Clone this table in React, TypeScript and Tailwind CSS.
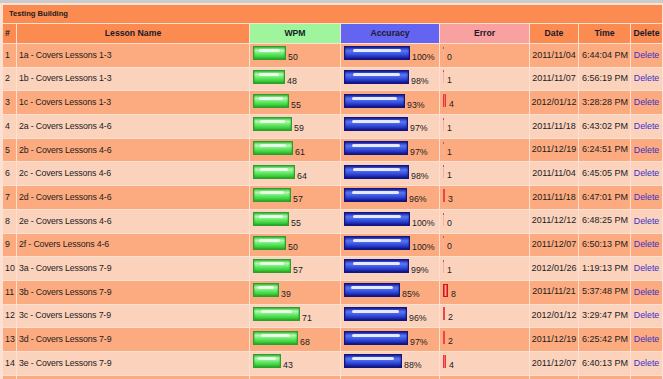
import React from 'react';

type Row = {
  lesson: string;
  wpm: number;
  acc: number;
  err: number;
  date: string;
  time: string;
};

const rows: Row[] = [
  { lesson: '1a - Covers Lessons 1-3', wpm: 50, acc: 100, err: 0, date: '2011/11/04', time: '6:44:04 PM' },
  { lesson: '1b - Covers Lessons 1-3', wpm: 48, acc: 98, err: 1, date: '2011/11/07', time: '6:56:19 PM' },
  { lesson: '1c - Covers Lessons 1-3', wpm: 55, acc: 93, err: 4, date: '2012/01/12', time: '3:28:28 PM' },
  { lesson: '2a - Covers Lessons 4-6', wpm: 59, acc: 97, err: 1, date: '2011/11/18', time: '6:43:02 PM' },
  { lesson: '2b - Covers Lessons 4-6', wpm: 61, acc: 97, err: 1, date: '2011/12/19', time: '6:24:51 PM' },
  { lesson: '2c - Covers Lessons 4-6', wpm: 64, acc: 98, err: 1, date: '2011/11/04', time: '6:45:05 PM' },
  { lesson: '2d - Covers Lessons 4-6', wpm: 57, acc: 96, err: 3, date: '2011/11/18', time: '6:47:01 PM' },
  { lesson: '2e - Covers Lessons 4-6', wpm: 55, acc: 100, err: 0, date: '2011/12/12', time: '6:48:25 PM' },
  { lesson: '2f - Covers Lessons 4-6', wpm: 50, acc: 100, err: 0, date: '2011/12/07', time: '6:50:13 PM' },
  { lesson: '3a - Covers Lessons 7-9', wpm: 57, acc: 99, err: 1, date: '2012/01/26', time: '1:19:13 PM' },
  { lesson: '3b - Covers Lessons 7-9', wpm: 39, acc: 85, err: 8, date: '2011/11/21', time: '5:37:48 PM' },
  { lesson: '3c - Covers Lessons 7-9', wpm: 71, acc: 96, err: 2, date: '2012/01/12', time: '3:29:47 PM' },
  { lesson: '3d - Covers Lessons 7-9', wpm: 68, acc: 97, err: 2, date: '2011/12/19', time: '6:25:42 PM' },
  { lesson: '3e - Covers Lessons 7-9', wpm: 43, acc: 88, err: 4, date: '2011/12/07', time: '6:40:13 PM' },
];

function GreenBar({ value }: { value: number }) {
  return (
    <span
      className="relative inline-block h-[14px] border border-[#2f9e2f] bg-[linear-gradient(to_bottom,#48d048_0%,#b4f8b4_28%,#5ee85e_60%,#28b828_100%)] shadow-[inset_0_0_2px_#1c8f1c]"
      style={{ width: Math.round(value * 0.66) }}
    >
      <span className="absolute left-[16%] right-[16%] top-[2px] h-[3px] rounded-full bg-white/75 blur-[0.6px]" />
    </span>
  );
}

function BlueBar({ value }: { value: number }) {
  return (
    <span
      className="relative inline-block h-[14px] border border-[#14147a] bg-[linear-gradient(to_bottom,#1a28b8_0%,#5a78f0_32%,#3550e0_62%,#111894_100%)] shadow-[inset_0_0_2px_#0c0c66]"
      style={{ width: Math.round(value * 0.66) }}
    >
      <span className="absolute left-[12%] right-[12%] top-[2px] h-[3px] rounded-full bg-white/85 blur-[0.6px]" />
    </span>
  );
}

function ErrBar({ value }: { value: number }) {
  const w = Math.max(1, Math.ceil(value * 0.6));
  if (value <= 1) {
    return (
      <span className="relative inline-block h-[13px] w-[1px] bg-[#efb2a4]">
        <span className="absolute left-0 top-0 h-[2px] w-[1px] bg-[#d8503c]" />
      </span>
    );
  }
  if (value <= 4) {
    return (
      <span
        className="inline-block h-[13px] bg-[linear-gradient(to_right,#d82020,#ff6a6a_50%,#d82020)]"
        style={{ width: w }}
      />
    );
  }
  return (
    <span
      className="inline-block h-[13px] border border-[#c81818] bg-[linear-gradient(to_right,#e83030,#ff9c9c_50%,#e83030)]"
      style={{ width: w }}
    />
  );
}

export default function App() {
  return (
    <div className="h-[379px] w-[663px] overflow-hidden border-t-[3px] border-[#cbcbcb] bg-[#fce1d2] pl-[2px] pt-[1px] font-['Liberation_Sans',Arial,sans-serif] text-[8.8px] text-[#1c1c1c]">
      <table className="w-[661px] table-fixed border-separate border-spacing-[1px]">
        <colgroup>
          <col className="w-[13px]" />
          <col className="w-[232px]" />
          <col className="w-[90px]" />
          <col className="w-[98px]" />
          <col className="w-[89px]" />
          <col className="w-[48px]" />
          <col className="w-[51px]" />
          <col className="w-[31px]" />
        </colgroup>
        <thead>
          <tr>
            <th colSpan={8} className="h-[18px] bg-[#fc8b51] pl-[6px] text-left text-[7.6px] font-bold">
              Testing Building
            </th>
          </tr>
          <tr className="text-[8.7px] font-bold text-[#1a1a2a]">
            <th className="h-[19px] bg-[#fc8b51] pl-[2px] text-left">#</th>
            <th className="bg-[#fc8b51] text-center">Lesson Name</th>
            <th className="bg-[#9ff59c] text-center">WPM</th>
            <th className="bg-[#6464f2] text-center">Accuracy</th>
            <th className="bg-[#f9a0a0] text-center">Error</th>
            <th className="bg-[#fc8b51] text-center">Date</th>
            <th className="bg-[#fc8b51] text-center">Time</th>
            <th className="bg-[#fc8b51] text-center">Delete</th>
          </tr>
        </thead>
        <tbody>
          {rows.map((r, i) => {
            const bg = i % 2 === 0 ? 'bg-[#fcab80]' : 'bg-[#fbd2bc]';
            return (
              <tr key={i} className={bg}>
                <td className="h-[22.7px] whitespace-nowrap pl-[2px] align-middle">{i + 1}</td>
                <td className="whitespace-nowrap pl-[2px] align-middle tracking-[-0.15px]">{r.lesson}</td>
                <td className="whitespace-nowrap pl-[3px] align-middle">
                  <GreenBar value={r.wpm} />
                  <span className="ml-[2px]">{r.wpm}</span>
                </td>
                <td className="whitespace-nowrap pl-[3px] align-middle">
                  <BlueBar value={r.acc} />
                  <span className="ml-[2px]">{r.acc}%</span>
                </td>
                <td className="whitespace-nowrap pl-[3px] align-middle">
                  <ErrBar value={r.err} />
                  <span className="ml-[3px]">{r.err}</span>
                </td>
                <td className="whitespace-nowrap text-center align-middle text-[9px]">{r.date}</td>
                <td className="whitespace-nowrap pl-[1px] text-center align-middle text-[9px]">{r.time}</td>
                <td className="whitespace-nowrap text-center align-middle text-[#3a2fc9]">Delete</td>
              </tr>
            );
          })}
          <tr className="bg-[#fcab80]">
            <td className="h-[22.7px]" />
            <td />
            <td />
            <td />
            <td />
            <td />
            <td />
            <td />
          </tr>
        </tbody>
      </table>
    </div>
  );
}
